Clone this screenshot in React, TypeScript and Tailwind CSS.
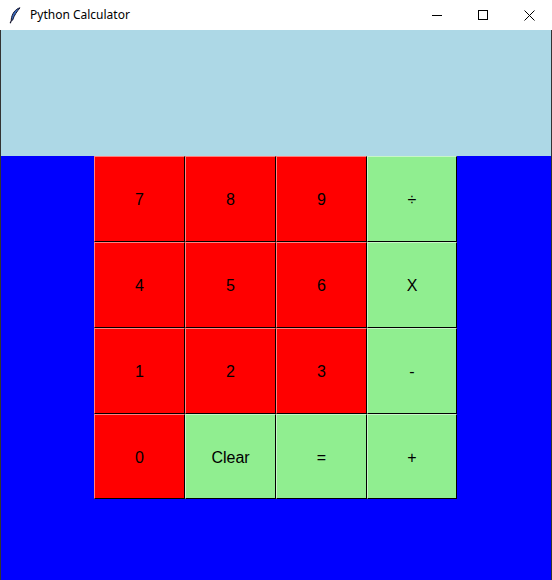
const keys: { label: string; green?: boolean }[] = [
  { label: "7" },
  { label: "8" },
  { label: "9" },
  { label: "÷", green: true },
  { label: "4" },
  { label: "5" },
  { label: "6" },
  { label: "X", green: true },
  { label: "1" },
  { label: "2" },
  { label: "3" },
  { label: "-", green: true },
  { label: "0" },
  { label: "Clear", green: true },
  { label: "=", green: true },
  { label: "+", green: true },
];

function Feather() {
  return (
    <svg width="12" height="17" viewBox="0 0 12 17">
      <path d="M11 0.8 C6.5 2 2.8 6.5 2.2 12.8 L3.6 13.2 C5 8.5 8 4.5 11 0.8 Z" fill="#3a6cc0" stroke="#15152e" strokeWidth="1" />
      <path d="M2.6 13 L1.2 16.2" stroke="#15152e" strokeWidth="1.2" />
    </svg>
  );
}

function TitleBar() {
  return (
    <div className="flex h-[30px] items-center bg-white">
      <div className="ml-[7px] flex w-[16px] justify-center">
        <Feather />
      </div>
      <span className="ml-[7px] text-[12px] text-black [font-family:'Noto_Sans','Liberation_Sans',sans-serif]">
        Python Calculator
      </span>
      <div className="ml-auto flex h-full">
        <button className="flex w-[46px] items-center justify-center">
          <svg width="10" height="10" viewBox="0 0 10 10">
            <path d="M0 5.5 H10" stroke="#000" strokeWidth="1" />
          </svg>
        </button>
        <button className="flex w-[46px] items-center justify-center">
          <svg width="10" height="10" viewBox="0 0 10 10">
            <rect x="0.5" y="0.5" width="9" height="9" fill="none" stroke="#000" strokeWidth="1" />
          </svg>
        </button>
        <button className="flex w-[46px] items-center justify-center">
          <svg width="11" height="11" viewBox="0 0 11 11">
            <path d="M0.5 0.5 L10.5 10.5 M10.5 0.5 L0.5 10.5" stroke="#000" strokeWidth="1" />
          </svg>
        </button>
      </div>
    </div>
  );
}

export default function App() {
  return (
    <div className="flex h-[580px] w-[552px] flex-col overflow-hidden [font-family:'Liberation_Sans',Arial,sans-serif]">
      <TitleBar />
      <div className="flex flex-1 flex-col border-x border-[#333333] bg-[#0000ff]">
        <div className="h-[126px] bg-[#add8e6]" />
        <div className="flex justify-center pr-[1px]">
          <div className="grid grid-cols-[91px_91px_91px_90px] grid-rows-[86px_86px_86px_85px]">
            {keys.map((k) => (
              <button
                key={k.label}
                className={`flex items-center justify-center border border-b-black border-r-black pt-[2px] text-[16px] text-black ${
                  k.green
                    ? "bg-[#90ee90] border-t-[#c8f6c8] border-l-[#c8f6c8]"
                    : "bg-[#ff0000] border-t-[#ff8080] border-l-[#ff8080]"
                }`}
              >
                {k.label}
              </button>
            ))}
          </div>
        </div>
      </div>
    </div>
  );
}
